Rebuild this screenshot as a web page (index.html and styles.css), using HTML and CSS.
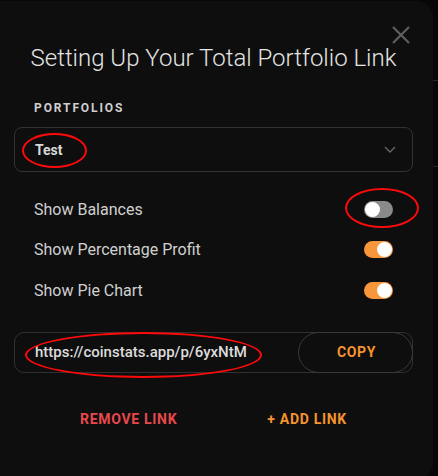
FILE: index.html
```html
<!DOCTYPE html>
<html>
<head>
<meta charset="utf-8">
<link rel="stylesheet" href="styles.css">
</head>
<body>
<div class="page">
  <div class="modal">
    <button class="close" aria-label="Close">
      <svg width="18" height="18" viewBox="0 0 18 18"><path d="M1 1L17 17M17 1L1 17" stroke="#5f5f5f" stroke-width="2.2" fill="none"/></svg>
    </button>
    <h1 class="title">Setting Up Your Total Portfolio Link</h1>
    <div class="label">PORTFOLIOS</div>
    <div class="select">
      <span class="select-value">Test</span>
      <svg class="chevron" width="12" height="7" viewBox="0 0 12 7"><path d="M1 1L6 6L11 1" stroke="#6a6a6a" stroke-width="1.3" fill="none"/></svg>
    </div>
    <div class="rows">
      <div class="row"><span>Show Balances</span><span class="toggle off"><span class="knob"></span></span></div>
      <div class="row"><span>Show Percentage Profit</span><span class="toggle on"><span class="knob"></span></span></div>
      <div class="row"><span>Show Pie Chart</span><span class="toggle on"><span class="knob"></span></span></div>
    </div>
    <div class="link-box">
      <span class="url">https://coinstats.app/p/6yxNtM</span>
      <button class="copy">COPY</button>
    </div>
    <div class="actions">
      <button class="action remove">REMOVE LINK</button>
      <button class="action add">+ ADD LINK</button>
    </div>
    <span class="mark mark-test"></span>
    <span class="mark mark-toggle"></span>
    <span class="mark mark-url"></span>
  </div>
</div>
</body>
</html>
```

FILE: styles.css
```css
* { box-sizing: border-box; }
html, body {
  margin: 0;
  padding: 0;
  width: 438px;
  height: 476px;
  overflow: hidden;
}
body {
  background: #060606;
  font-family: Roboto, "Liberation Sans", sans-serif;
}
.page {
  width: 438px;
  height: 476px;
  background:
    linear-gradient(#262626, #262626) 0 80px / 100% 1px no-repeat,
    linear-gradient(#262626, #262626) 0 166px / 100% 1px no-repeat,
    #070707;
  padding-top: 1px;
}
.modal {
  position: relative;
  width: 433px;
  height: 478px;
  background: #0e0e0e;
  border-radius: 0 16px 16px 0;
  padding: 0 20px 0 14px;
  display: flex;
  flex-direction: column;
}
.close {
  position: absolute;
  top: 25px;
  right: 23px;
  background: none;
  border: 0;
  padding: 0;
  width: 18px;
  height: 18px;
  display: flex;
}
.title {
  margin: 43px 0 0;
  font-size: 24px;
  line-height: 28px;
  font-weight: 300;
  color: #e4e4e4;
  text-align: center;
}
.label {
  margin-top: 29px;
  padding-left: 20px;
  font-size: 12px;
  line-height: 14px;
  font-weight: 700;
  letter-spacing: 1.9px;
  color: #cfcfcf;
}
.select {
  margin-top: 12px;
  height: 45px;
  border: 1px solid #323232;
  border-radius: 8px;
  display: flex;
  align-items: center;
  justify-content: space-between;
  padding: 0 16px 0 20px;
}
.select-value {
  font-size: 14px;
  font-weight: 700;
  color: #d8d8d8;
}
.rows {
  margin-top: 17px;
  display: flex;
  flex-direction: column;
}
.row {
  height: 40.5px;
  display: flex;
  align-items: center;
  justify-content: space-between;
  padding: 0 20px;
  font-size: 16px;
  color: #d0d0d0;
}
.toggle {
  width: 29px;
  height: 17px;
  border-radius: 9px;
  display: flex;
  align-items: center;
  padding: 0 2px;
}
.toggle.off { background: #8a8a8a; justify-content: flex-start; padding-left: 1px; }
.toggle.on { background: #f7963a; justify-content: flex-end; padding-right: 1px; }
.knob {
  width: 15px;
  height: 15px;
  border-radius: 50%;
  background: #ffffff;
}
.link-box {
  margin-top: 21px;
  height: 41px;
  border: 1px solid #303030;
  border-radius: 10px;
  display: flex;
  align-items: center;
  justify-content: space-between;
  padding-left: 20px;
}
.url {
  font-size: 15px;
  font-weight: 500;
  color: #dcdcdc;
}
.copy {
  width: 115px;
  height: 41px;
  margin-right: -1px;
  border: 1px solid #3a3a3a;
  border-radius: 21px;
  background: transparent;
  color: #f7932e;
  font-family: inherit;
  font-size: 14px;
  font-weight: 700;
  letter-spacing: 0.6px;
  padding: 0 0 0 2px;
}
.actions {
  margin-top: 36px;
  display: flex;
  justify-content: center;
  gap: 90px;
}
.action {
  background: none;
  border: 0;
  padding: 0;
  font-family: inherit;
  font-size: 14px;
  line-height: 20px;
  font-weight: 700;
  letter-spacing: 0.7px;
}
.remove { color: #e8484b; }
.add { color: #f7932e; }
.mark {
  position: absolute;
  border: 2.5px solid #ff0a0a;
  border-radius: 50%;
  pointer-events: none;
}
.mark-test { left: 22px; top: 132px; width: 65px; height: 35px; }
.mark-toggle { left: 345px; top: 187px; width: 74px; height: 40px; }
.mark-url { left: 25px; top: 331px; width: 237px; height: 46px; }
```
